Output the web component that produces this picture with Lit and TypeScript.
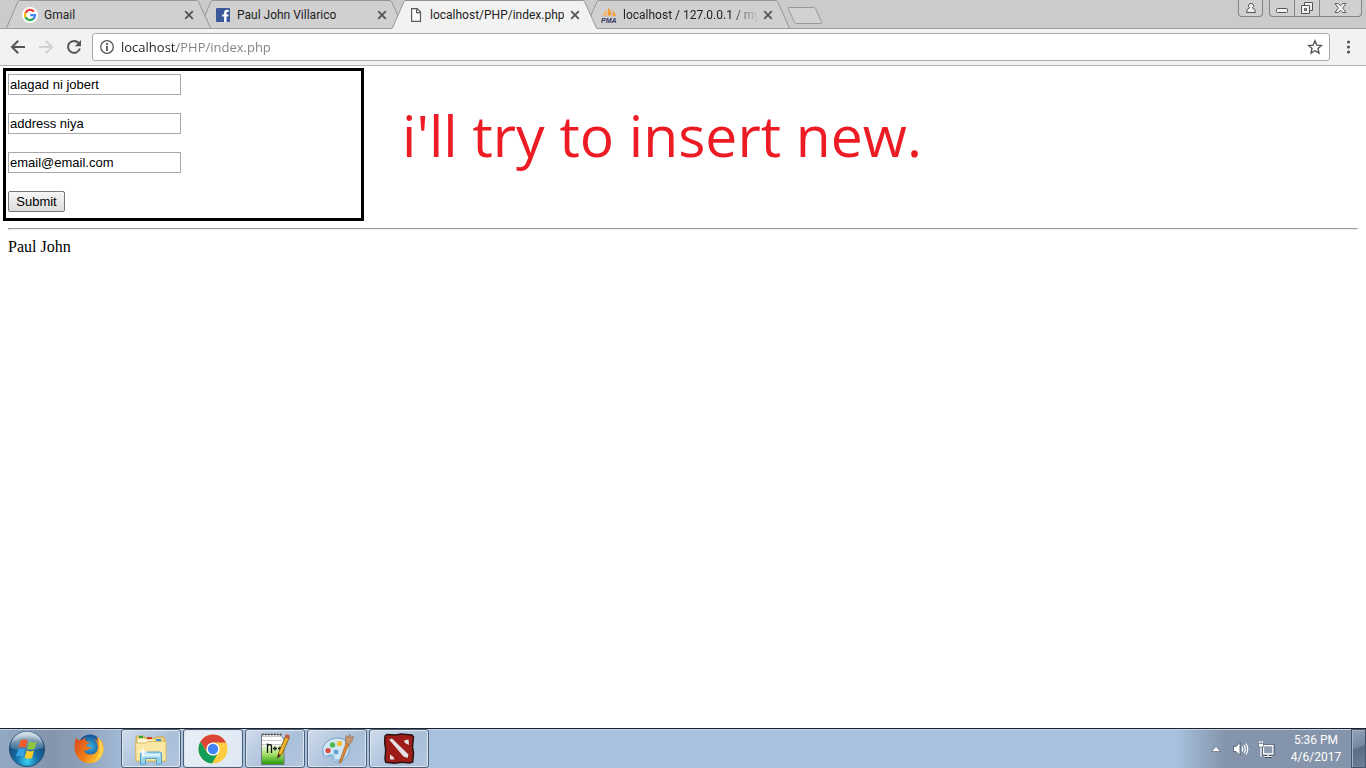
import { LitElement, html, css, svg, TemplateResult } from "lit";
import { customElement, property } from "lit/decorators.js";
import { classMap } from "lit/directives/class-map.js";

const googleIcon = html`<svg width="16" height="16" viewBox="0 0 16 16" aria-hidden="true">
  <circle cx="8" cy="8" r="8" fill="#fff" />
  <g fill="none" stroke-width="2.3">
    <path d="M11.9 4.6A5 5 0 0 0 3.5 5.9" stroke="#ea4335" />
    <path d="M3.6 5.7a5 5 0 0 0 0 4.7" stroke="#fbbc05" />
    <path d="M3.5 10.2A5 5 0 0 0 11.5 11.6" stroke="#34a853" />
    <path d="M8.2 8.2H13A5 5 0 0 1 11.3 11.8" stroke="#4285f4" />
  </g>
</svg>`;

const facebookIcon = html`<svg width="16" height="16" viewBox="0 0 16 16" aria-hidden="true">
  <rect x="1" y="1" width="14" height="14" rx="1" fill="#3b5998" />
  <path d="M9.1 15V9.6H7.2V7.4h1.9V5.8c0-2 1.2-3 2.9-3h1.6v2.1h-1.1c-.9 0-1 .4-1 1.1v1.4h2.1l-.3 2.2h-1.8V15z" fill="#fff" />
</svg>`;

const documentIcon = html`<svg width="16" height="16" viewBox="0 0 16 16" aria-hidden="true">
  <path d="M3.6 1.600h5.600l3.300 3.400v9.400H3.600z" fill="#fafafa" stroke="#5a5a5a" stroke-width="1.2" />
  <path d="M8.6 1.600v4h3.900" fill="none" stroke="#5a5a5a" stroke-width="1.2" />
</svg>`;

const sailIcon = html`<svg width="16" height="16" viewBox="0 0 16 16" aria-hidden="true">
  <path d="M1 8.6 6.300 2 5.900 8.600z" fill="#f6b663" />
  <path d="M7 .4Q10.600 4 10.400 8.600H6.400Q7.900 4.800 7 .4z" fill="#f79a2d" />
  <path d="M11.300 3.200Q14.600 6 15.200 9.200l-3.900-.6q.9-2.600 0-5.400z" fill="#f89c35" />
  <path d="M1 9.300h13.800l-.6.7H1.400z" fill="#c9c3bb" />
  <text x="0" y="15.500" font-family="Liberation Sans, Arial, sans-serif" font-size="7" font-weight="bold" font-style="italic" fill="#34396b">PMA</text>
</svg>`;

const closeGlyph = html`<svg width="10" height="10" viewBox="0 0 10 10" aria-hidden="true">
  <path d="M1.2 1.2l7.6 7.6M8.800 1.200 1.200 8.800" stroke="#555" stroke-width="1.8" />
</svg>`;

@customElement("browser-tab")
class BrowserTab extends LitElement {
  @property() label = "";
  @property({ type: Boolean }) active = false;
  @property({ type: Boolean }) fade = false;
  @property({ attribute: false }) icon: TemplateResult = documentIcon;

  static styles = css`
    :host {
      display: grid;
      flex: 0 1 205px;
      min-width: 60px;
      height: 29px;
    }
    .shape,
    .content {
      grid-area: 1 / 1;
    }
    .shape {
      width: 100%;
      height: 29px;
    }
    .content {
      display: flex;
      align-items: center;
      gap: 6px;
      padding: 1px 17px 0 16px;
      min-width: 0;
    }
    .content > svg {
      flex: none;
    }
    button {
      border: 0;
      padding: 0;
      background: none;
    }
    .title {
      flex: 1;
      min-width: 0;
      overflow: hidden;
      white-space: nowrap;
      text-align: left;
      font: 12px/18px Roboto, "Open Sans", sans-serif;
      color: #222;
    }
    .fade {
      mask-image: linear-gradient(90deg, #000 108px, transparent 136px);
    }
    .close {
      display: flex;
      flex: none;
    }
  `;

  render() {
    const fill = this.active ? "#f2f2f2" : "#d0d0d0";
    return html`
      <svg class="shape" viewBox="0 0 205 29" preserveAspectRatio="none" aria-hidden="true">
        <path d="M0 29 .5 28 12 1.5Q12.5.5 14 .5H190Q192 .5 192.5 1.5L204.5 28V29z" fill=${fill} />
        <path d="M.5 28 12 1.5Q12.5.5 14 .5H190Q192 .5 192.5 1.5L204.5 28" fill="none" stroke="#969696" />
        ${this.active ? "" : svg`<path d="M0 28.5H205" stroke="#a0a0a0" />`}
      </svg>
      <div class="content">
        ${this.icon}
        <button class=${classMap({ title: true, fade: this.fade })}>${this.label}</button>
        <button class="close" aria-label="Close tab">${closeGlyph}</button>
      </div>
    `;
  }
}

const startIcon = html`<svg width="38" height="38" viewBox="0 0 38 38" aria-hidden="true">
  <defs>
    <radialGradient id="orb" cx="50%" cy="85%" r="75%">
      <stop offset="0" stop-color="#3ad3f3" /><stop offset=".4" stop-color="#1671a9" />
      <stop offset=".85" stop-color="#174c79" /><stop offset="1" stop-color="#6790b1" />
    </radialGradient>
    <linearGradient id="gloss" x2="0" y2="1">
      <stop offset="0" stop-color="#fff" stop-opacity=".75" /><stop offset="1" stop-color="#fff" stop-opacity=".12" />
    </linearGradient>
  </defs>
  <circle cx="19" cy="19" r="17.5" fill="url(#orb)" stroke="#234a70" />
  <path d="M2.5 18A16.5 16.5 0 0 1 35.5 18Q19 23 2.5 18z" fill="url(#gloss)" />
  <path d="M12.5 10.5q3.500-2 7.300.1L17.700 18q-3.500-2-7.300-.2z" fill="#ed5b2b" />
  <path d="M21.200 11.400q3.600 2 7.500.2L26.500 19q-3.800 1.600-7.400-.3z" fill="#8bc63f" />
  <path d="M10 19.500q3.800-1.700 7.300.2l-2.100 7.300q-3.500-2-7.300-.2z" fill="#35a3e3" />
  <path d="M18.700 20.300q3.600 2 7.400.3L24 28q-3.800 1.700-7.400-.3z" fill="#fdca2d" />
</svg>`;

const firefoxIcon = html`<svg width="32" height="32" viewBox="0 0 32 32" aria-hidden="true">
  <defs>
    <linearGradient id="fox" x2="1" y2=".6">
      <stop offset="0" stop-color="#d9431e" /><stop offset=".6" stop-color="#f08019" /><stop offset="1" stop-color="#ffc936" />
    </linearGradient>
    <radialGradient id="globe"><stop offset="0" stop-color="#3bb0e0" /><stop offset="1" stop-color="#164f94" /></radialGradient>
  </defs>
  <circle cx="17" cy="13.500" r="12" fill="url(#globe)" />
  <path d="M3 5q1.500.6 2.400 2.500 2-1.300 4.400-.8 1.200-2 3-2.200-1 2 .1 3.800 1.700.6 3.800.5-.2 1.700-3 2.700-.9 1 .6 2 2.300.1 4.200 1.200-2.400.7-3.800 2.300-2 1.400-4.200.2 2.500 4.700 8 4.200 6.300-1 6.500-7.500-.3-4.500-3.500-7.700 2.500.6 4 2.700-.7-3-3-5.200 4 1.600 5.500 5.300l.4-2q3 5.500 2 11.500-1.800 8-8.900 11-8.500 2.400-14.800-3Q1 20.500 1.500 13 1.600 8.500 3 5z" fill="url(#fox)" />
  <path d="M25 4q5.500 5.500 4.500 14-1.500 8-9 11 6.500-5 6-14-.2-6-1.500-11z" fill="#ffd34e" />
</svg>`;

const explorerIcon = html`<svg width="34" height="32" viewBox="0 0 34 32" aria-hidden="true">
  <path d="M2 5 3 3h7l1 2h10l1-1h8l1 2v22H2z" fill="#ecd37e" stroke="#c8a951" />
  <path d="M5 3h4v2H5z" fill="#2f9e3d" /><path d="M13 4h5v2h-5z" fill="#d4402e" /><path d="M22 6h5v2h-5z" fill="#3c8fd3" />
  <path d="M4 6h8l1 1h7l1 2h10v4H4z" fill="#fff7d8" />
  <path d="M1.500 10H12l2-1.500h18V28H2z" fill="#fae7a4" stroke="#d8bb68" />
  <path d="M6.500 31V21q0-2 2-2h17q2 0 2 2v10h-5v-5.500h-11V31z" fill="#9bd3ec" stroke="#549fc4" />
  <path d="M8 20.500h18v3H8z" fill="#d6f2fc" />
  <path d="M9 13l1 5 5 1-5 1-1 6-1-6-5-1 5-1z" fill="#fff" opacity=".9" />
</svg>`;

const chromeIcon = html`<svg width="30" height="30" viewBox="0 0 30 30" aria-hidden="true">
  <circle cx="15" cy="15" r="14.500" fill="#ffcd42" />
  <path d="M2.400 7.800 9.400 18.300 15 15 15 8.500H28Q23.500.5 15 .5 7 .5 2.400 7.800z" fill="#db4437" />
  <path d="M2.400 7.800 9.400 19l5 2.500 5.500-2.500L14 29.500A14.500 14.500 0 0 1 2.400 7.800z" fill="#109d58" />
  <circle cx="15" cy="15" r="6.600" fill="#fff" /><circle cx="15" cy="15" r="5.200" fill="#4285f4" />
</svg>`;

const notepadIcon = html`<svg width="32" height="34" viewBox="0 0 32 34" aria-hidden="true">
  <defs><linearGradient id="note" x2="0" y2="1">
    <stop offset=".3" stop-color="#fff" /><stop offset=".65" stop-color="#a9e26d" /><stop offset="1" stop-color="#1f9907" />
  </linearGradient></defs>
  <path d="M2.500 2.500H20l5 4.500v25.500h-22.500z" fill="url(#note)" stroke="#777" />
  <path d="M3 4.500h20M3 8.500h20M3 12.500h20" stroke="#c8c8c8" />
  <path d="M3 2.500h21" stroke="#555" stroke-width="2" stroke-dasharray="1.500 1.500" />
  <path d="M8.500 21V11.500M8.500 13.500q4-2 4 1V21M14 16.500h4M19 16.500h4M16 14.500v4M21 14.500v4" stroke="#111" stroke-width="1.300" fill="none" />
  <path d="M18.500 26.500 19.500 21 27 3.500l3.500 1.500-7.700 17.500z" fill="#efb72a" stroke="#8c6518" />
  <path d="M18.500 26.500 19.300 22l2.700 1z" fill="#333" /><path d="M26 5.500 27.400 2l3.500 1.500-1.500 3.400z" fill="#c85d4b" />
</svg>`;

const paintIcon = html`<svg width="34" height="34" viewBox="0 0 34 34" aria-hidden="true">
  <path d="M3 21Q1 14 8 9 15 4 23 7q8 4 6 12-2 9-10 11-6 1-6-4-1-3-5-1-4 1-5-4z" fill="#cfe7f6" stroke="#719fc5" />
  <path d="M4 21q2 4 6 1 5 0 5 5 6 2 11-6-2 9-9 8-3-1-3-4-5-1-7-1-2 0-3-3z" fill="#8dbbe0" />
  <circle cx="8" cy="18.500" r="2.600" fill="#dc4b42" /><circle cx="12.500" cy="13" r="2.700" fill="#52b74d" />
  <circle cx="19.500" cy="11.500" r="2.700" fill="#f5bd39" /><circle cx="16" cy="20" r="2.500" fill="#67a4d4" />
  <path d="M19 31 26 11l3 1.500-8 18z" fill="#dc8532" stroke="#a95f22" stroke-width=".6" />
  <path d="M25.500 11.500q-.5-5 1-8l1.500 2 2-3 .5 3 3-1q-1 5-4 8z" fill="#c5976c" stroke="#936643" stroke-width=".6" />
</svg>`;

const dotaIcon = html`<svg width="32" height="32" viewBox="0 0 32 32" aria-hidden="true">
  <path d="m2 3 2-1.500 9 .5 5-1 11 1 1.500 2-1 10 1 6-.8 9-3 1-8-.8-7 1-9-1L2 26l.7-9-1-7z" fill="#9d1c18" stroke="#2b1412" stroke-width="1.500" />
  <path d="M6 6.500 9 5.500 25.500 21.500 24.500 25 20.500 23.500z" fill="#e4e1e4" />
  <path d="m21 7.500 4.500-1 .5 5.500-4-2zM7 21.500l3.500 2.500 1 2.500H7z" fill="#e4e1e4" />
</svg>`;

const taskApps = [
  { name: "File Explorer", icon: explorerIcon, current: false },
  { name: "Chrome", icon: chromeIcon, current: true },
  { name: "Notepad++", icon: notepadIcon, current: false },
  { name: "Paint", icon: paintIcon, current: false },
  { name: "Dota 2", icon: dotaIcon, current: false },
];

@customElement("task-bar")
class TaskBar extends LitElement {
  static styles = css`
    :host {
      display: flex;
      flex: none;
      height: 40px;
      box-sizing: border-box;
      border-top: 1px solid #1b222c;
      box-shadow: inset 0 1px #c4d4e6;
      background:
        linear-gradient(270deg, #8494aa 140px, #a7c1de 190px, transparent 191px),
        linear-gradient(90deg, #93aac6 0, #8494ab 50px, #8b9db6 78px, #a3bbd8 122px, #a7c1de 180px);
      font: 12px/17px Roboto, "Open Sans", sans-serif;
      color: #fff;
    }
    button {
      display: flex;
      align-items: center;
      justify-content: center;
      border: 0;
      padding: 0;
      background: none;
      color: inherit;
      font: inherit;
    }
    .start {
      width: 54px;
    }
    .pinned {
      width: 67px;
      padding-left: 3px;
    }
    .apps {
      display: flex;
      flex: 1;
      gap: 2px;
    }
    .app {
      width: 60px;
      border: 1px solid #4e5f75;
      border-radius: 3px;
      box-shadow: inset 0 0 0 1px #dbe5f0;
      background: linear-gradient(135deg, #cfdcec, #aabfd9 60%, #b3c7df);
    }
    .current {
      background: linear-gradient(135deg, #e9eff7, #dde7f3);
    }
    .tray {
      display: flex;
      align-items: center;
    }
    .tray button {
      height: 100%;
    }
    .more {
      width: 24px;
    }
    .status {
      width: 25px;
    }
    .clock {
      width: 73px;
      padding-left: 3px;
      flex-direction: column;
    }
    .desktop {
      width: 15px;
      border: 1px solid #45556b;
      box-shadow: inset 1px 1px #a3b1c3;
      background: linear-gradient(160deg, #93a2b6, #7587a0 45%, #596b84 50%, #6f8198);
    }
  `;

  render() {
    return html`
      <button class="start" aria-label="Start">${startIcon}</button>
      <button class="pinned" aria-label="Firefox">${firefoxIcon}</button>
      <div class="apps">
        ${taskApps.map(
          (app) => html`<button class=${classMap({ app: true, current: app.current })} aria-label=${app.name}>${app.icon}</button>`
        )}
      </div>
      <div class="tray">
        <button class="more" aria-label="Show hidden icons">
          <svg width="10" height="6" viewBox="0 0 10 6"><path d="M.5 5.500 5 .5l4.500 5z" fill="#fff" stroke="#4e5c70" stroke-width=".6" /></svg>
        </button>
        <button class="status" aria-label="Volume">
          <svg width="18" height="16" viewBox="0 0 18 16">
            <path d="M1.500 5.500H4L8 1.500v13L4 10.500H1.500z" fill="#fff" stroke="#46546a" stroke-width=".8" />
            <path d="M10 5.500q1.500 2.500 0 5M12 4q2.500 4 0 8M14 2.500q3.500 5.500 0 11" stroke="#fff" stroke-width="1.200" fill="none" />
          </svg>
        </button>
        <button class="status" aria-label="Network">
          <svg width="18" height="18" viewBox="0 0 18 18" fill="none">
            <path d="M6.500 5.500H16V14H6.500zM8 16.500h7M11 14v2" stroke="#39475c" stroke-width="3" />
            <path d="M6.500 5.500H16V14H6.500z" fill="#8d9cb0" stroke="#fff" stroke-width="1.300" />
            <path d="M7.500 16.500h7.500M11 14v2M4 7v9.500M2.700 1v3M5.300 1v3" stroke="#fff" stroke-width="1.200" />
            <path d="M1.500 3.500h5v3.500h-5z" fill="#fff" stroke="#39475c" stroke-width=".5" />
          </svg>
        </button>
        <button class="clock"><span>5:36 PM</span><span>4/6/2017</span></button>
        <button class="desktop" aria-label="Show desktop"></button>
      </div>
    `;
  }
}

@customElement("app-root")
class AppRoot extends LitElement {
  static styles = css`
    :host {
      display: flex;
      flex-direction: column;
      height: 100vh;
      background: #fff;
    }
    button {
      padding: 0;
      border: 0;
      background: none;
    }
    .strip {
      display: flex;
      flex: none;
      height: 29px;
      padding-left: 6px;
      background: linear-gradient(#a0a0a0, #a0a0a0) 0 28px / 100% 1px no-repeat #cbcbcb;
    }
    .tabs {
      display: flex;
      flex: 1;
      min-width: 0;
    }
    browser-tab {
      margin-right: -12px;
      position: relative;
    }
    browser-tab:nth-of-type(1) {
      z-index: 3;
    }
    browser-tab:nth-of-type(2) {
      z-index: 2;
    }
    browser-tab[active] {
      z-index: 4;
    }
    .new-tab {
      display: flex;
      padding: 6px 0 0 9px;
    }
    .window {
      display: flex;
      padding-right: 4px;
    }
    .window button {
      display: flex;
      align-items: center;
      justify-content: center;
      box-sizing: border-box;
      height: 17px;
      border: 1px solid #858585;
      border-top: 0;
      background: #d0d0d0;
    }
    .user {
      width: 25px;
      margin-right: 6px;
      border-radius: 0 0 4px 4px;
    }
    .window .minimize {
      width: 25px;
      border-right: 0;
      border-radius: 0 0 0 4px;
    }
    .restore {
      width: 26px;
    }
    .window .quit {
      width: 42px;
      border-left: 0;
      border-radius: 0 0 4px;
    }
    .toolbar {
      display: flex;
      flex: none;
      align-items: center;
      box-sizing: border-box;
      height: 37px;
      padding: 0 8px 0 10px;
      border-bottom: 1px solid #b4b4b4;
      background: #f2f2f2;
    }
    .nav {
      display: flex;
      gap: 12px;
      margin-right: 10px;
    }
    .toolbar button {
      display: flex;
    }
    .address {
      display: flex;
      flex: 1;
      align-items: center;
      gap: 6px;
      box-sizing: border-box;
      height: 28px;
      padding: 0 6px;
      border: 1px solid #aaa;
      border-radius: 3px;
      background: #fff;
    }
    .url {
      flex: 1;
      min-width: 0;
      height: 22px;
      padding: 0;
      border: 0;
      font: 13px/20px "Open Sans", "Noto Sans", sans-serif;
      color: transparent;
      background: linear-gradient(90deg, #222 56px, #808080 56px);
      background-clip: text;
      -webkit-background-clip: text;
    }
    .menu {
      margin-left: 9px;
    }
    main {
      flex: 1;
      min-height: 0;
      font: 16px/18px "Liberation Serif", "Times New Roman", serif;
      color: #000;
    }
    .row {
      display: flex;
      align-items: flex-start;
      gap: 38px;
      padding: 2px 3px 0;
    }
    form {
      display: flex;
      flex-direction: column;
      align-items: flex-start;
      gap: 18px;
      box-sizing: border-box;
      width: 361px;
      padding: 3px 2px 6px;
      border: 3px solid #000;
    }
    .field,
    .submit {
      box-sizing: border-box;
      height: 21px;
      font: 13px/15px "Liberation Sans", Arial, sans-serif;
      color: #000;
    }
    .field {
      width: 173px;
      padding: 1px;
      border: 1px solid #a9a9a9;
      background: #fff;
    }
    .submit {
      width: 57px;
      border: 1px solid #777;
      border-radius: 2px;
      background: linear-gradient(#f6f6f6, #dcdcdc);
    }
    .note {
      margin: 29px 0 0;
      font: 57px/76px "Open Sans", "Noto Sans", sans-serif;
      color: #ed1c24;
      white-space: nowrap;
    }
    hr {
      margin: 7px 8px 8px;
      border: 1px solid;
      border-color: #9a9a9a #eee #eee #9a9a9a;
    }
    .name {
      margin: 0 8px;
    }
  `;

  render() {
    return html`
      <header class="strip">
        <div class="tabs">
          <browser-tab label="Gmail" .icon=${googleIcon}></browser-tab>
          <browser-tab label="Paul John Villarico" .icon=${facebookIcon}></browser-tab>
          <browser-tab label="localhost/PHP/index.php" active .icon=${documentIcon}></browser-tab>
          <browser-tab label="localhost / 127.0.0.1 / my" fade .icon=${sailIcon}></browser-tab>
          <button class="new-tab" aria-label="New tab">
            <svg width="36" height="19" viewBox="0 0 36 19">
              <path d="M2 1.500H26.500Q28 1.500 28.500 2.500L34.500 16Q35 17.500 33.500 17.500H9.500Q8 17.500 7.500 16.500L1.500 3Q1 1.500 2 1.500z" fill="#d2d2d2" stroke="#999" />
            </svg>
          </button>
        </div>
        <div class="window">
          <button class="user" aria-label="Profile">
            <svg width="12" height="12" viewBox="0 0 12 12"><path d="M6 1.500a2.300 2.300 0 0 1 1.400 4.300q3 .7 3.100 4.700h-9q.1-4 3.100-4.700A2.300 2.300 0 0 1 6 1.500z" fill="#eee" stroke="#555" /></svg>
          </button>
          <button class="minimize" aria-label="Minimize">
            <svg width="12" height="12" viewBox="0 0 12 12"><rect x=".5" y="6.500" width="11" height="4" rx="1" fill="#f2f2f2" stroke="#555" /></svg>
          </button>
          <button class="restore" aria-label="Restore">
            <svg width="14" height="14" viewBox="0 0 14 14"><path d="M4.500 1.500h8v8h-8z" fill="#eee" stroke="#555" /><path d="M1.500 4.500h8v8h-8z" fill="#f2f2f2" stroke="#555" /><path d="M4.500 7.500h2v2h-2z" fill="#ccc" stroke="#555" /></svg>
          </button>
          <button class="quit" aria-label="Close">
            <svg width="13" height="12" viewBox="0 0 13 12"><path d="M1 1.500h3.200l2.300 2.300 2.300-2.300H12L8.700 6l3.300 4.500H8.800L6.500 8.200l-2.300 2.300H1L4.300 6z" fill="#f0f0f0" stroke="#555" stroke-width=".9" /></svg>
          </button>
        </div>
      </header>
      <nav class="toolbar">
        <div class="nav">
          <button aria-label="Back">
            <svg width="16" height="16" viewBox="0 0 16 16"><path d="M15 8H2.500M8.200 1.700 2 8l6.200 6.300" fill="none" stroke="#555" stroke-width="2" /></svg>
          </button>
          <button aria-label="Forward">
            <svg width="16" height="16" viewBox="0 0 16 16"><path d="M1 8H13.500M7.800 1.700 14 8l-6.200 6.300" fill="none" stroke="#d2d2d2" stroke-width="2" /></svg>
          </button>
          <button aria-label="Reload">
            <svg width="16" height="16" viewBox="0 0 16 16"><path d="M13.800 9.500A6 6 0 1 1 12.600 4" fill="none" stroke="#555" stroke-width="2" /><path d="M15 1v6.200H8.800z" fill="#555" /></svg>
          </button>
        </div>
        <div class="address">
          <svg width="16" height="16" viewBox="0 0 16 16" aria-hidden="true"><circle cx="8" cy="8" r="6.300" fill="none" stroke="#555" stroke-width="1.300" /><path d="M8 4v2M8 7v5" stroke="#555" stroke-width="1.800" /></svg>
          <input class="url" aria-label="Address" value="localhost/PHP/index.php" />
          <button aria-label="Bookmark this page">
            <svg width="16" height="16" viewBox="0 0 16 16"><path d="m8 1.800 1.800 4.300 4.700.4-3.500 3.100 1 4.500L8 11.700l-4 2.400 1-4.500-3.500-3.100 4.700-.4z" fill="none" stroke="#555" stroke-width="1.400" /></svg>
          </button>
        </div>
        <button class="menu" aria-label="Menu">
          <svg width="19" height="16" viewBox="0 0 19 16"><g fill="#555"><circle cx="9.500" cy="3" r="1.600" /><circle cx="9.500" cy="8" r="1.600" /><circle cx="9.500" cy="13" r="1.600" /></g></svg>
        </button>
      </nav>
      <main>
        <div class="row">
          <form @submit=${(e: Event) => e.preventDefault()}>
            <input class="field" aria-label="Name" value="alagad ni jobert" />
            <input class="field" aria-label="Address" value="address niya" />
            <input class="field" aria-label="Email" value="email@email.com" />
            <button class="submit">Submit</button>
          </form>
          <p class="note">i'll try to insert new.</p>
        </div>
        <hr />
        <p class="name">Paul John</p>
      </main>
      <task-bar></task-bar>
    `;
  }
}
